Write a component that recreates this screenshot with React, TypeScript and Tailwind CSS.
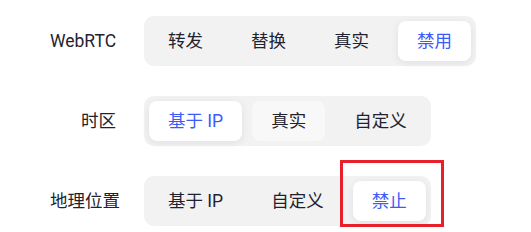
import React, { useState } from 'react';

interface SegmentProps {
  options: string[];
  value: string;
  hover?: string;
  onChange: (v: string) => void;
}

function Segment({ options, value, hover, onChange }: SegmentProps) {
  return (
    <div className="flex gap-[10px] rounded-[10px] bg-[#f2f2f3] p-[5px]">
      {options.map((opt) => {
        const active = opt === value;
        return (
          <button
            key={opt}
            type="button"
            onClick={() => onChange(opt)}
            className={
              active
                ? 'h-10 whitespace-nowrap rounded-lg bg-white px-[19px] text-[17.5px] text-[#3b5bfb] shadow-[0_2px_8px_rgba(30,30,60,0.08)]'
                : opt === hover
                ? 'h-10 whitespace-nowrap rounded-lg bg-[#f8f8f8] px-[19px] text-[17.5px] text-[#1f2330]'
                : 'h-10 whitespace-nowrap rounded-lg px-[19px] text-[17.5px] text-[#1f2330]'
            }
          >
            {opt}
          </button>
        );
      })}
    </div>
  );
}

export default function App() {
  const [webrtc, setWebrtc] = useState('禁用');
  const [timezone, setTimezone] = useState('基于 IP');
  const [geo, setGeo] = useState('禁止');

  const rows = [
    { label: 'WebRTC', options: ['转发', '替换', '真实', '禁用'], value: webrtc, set: setWebrtc },
    { label: '时区', options: ['基于 IP', '真实', '自定义'], value: timezone, set: setTimezone, hover: '真实' },
    { label: '地理位置', options: ['基于 IP', '自定义', '禁止'], value: geo, set: setGeo },
  ];

  return (
    <div
      className="relative h-[232px] w-[531px] overflow-hidden bg-white pt-4"
      style={{ fontFamily: 'Roboto, "Noto Sans CJK SC", sans-serif' }}
    >
      <div className="flex flex-col gap-[30px]">
        {rows.map((row) => (
          <div key={row.label} className="flex items-center pl-[50px]">
            <div className="mr-[28px] w-[66px] whitespace-nowrap text-right text-[17.5px] text-[#1f2330]">
              {row.label}
            </div>
            <Segment options={row.options} value={row.value} hover={row.hover} onChange={row.set} />
          </div>
        ))}
      </div>

      {/* highlight annotation */}
      <div className="pointer-events-none absolute left-[340px] top-[160px] h-[67px] w-[104px] border-[3px] border-[#e8202a]" />
    </div>
  );
}
